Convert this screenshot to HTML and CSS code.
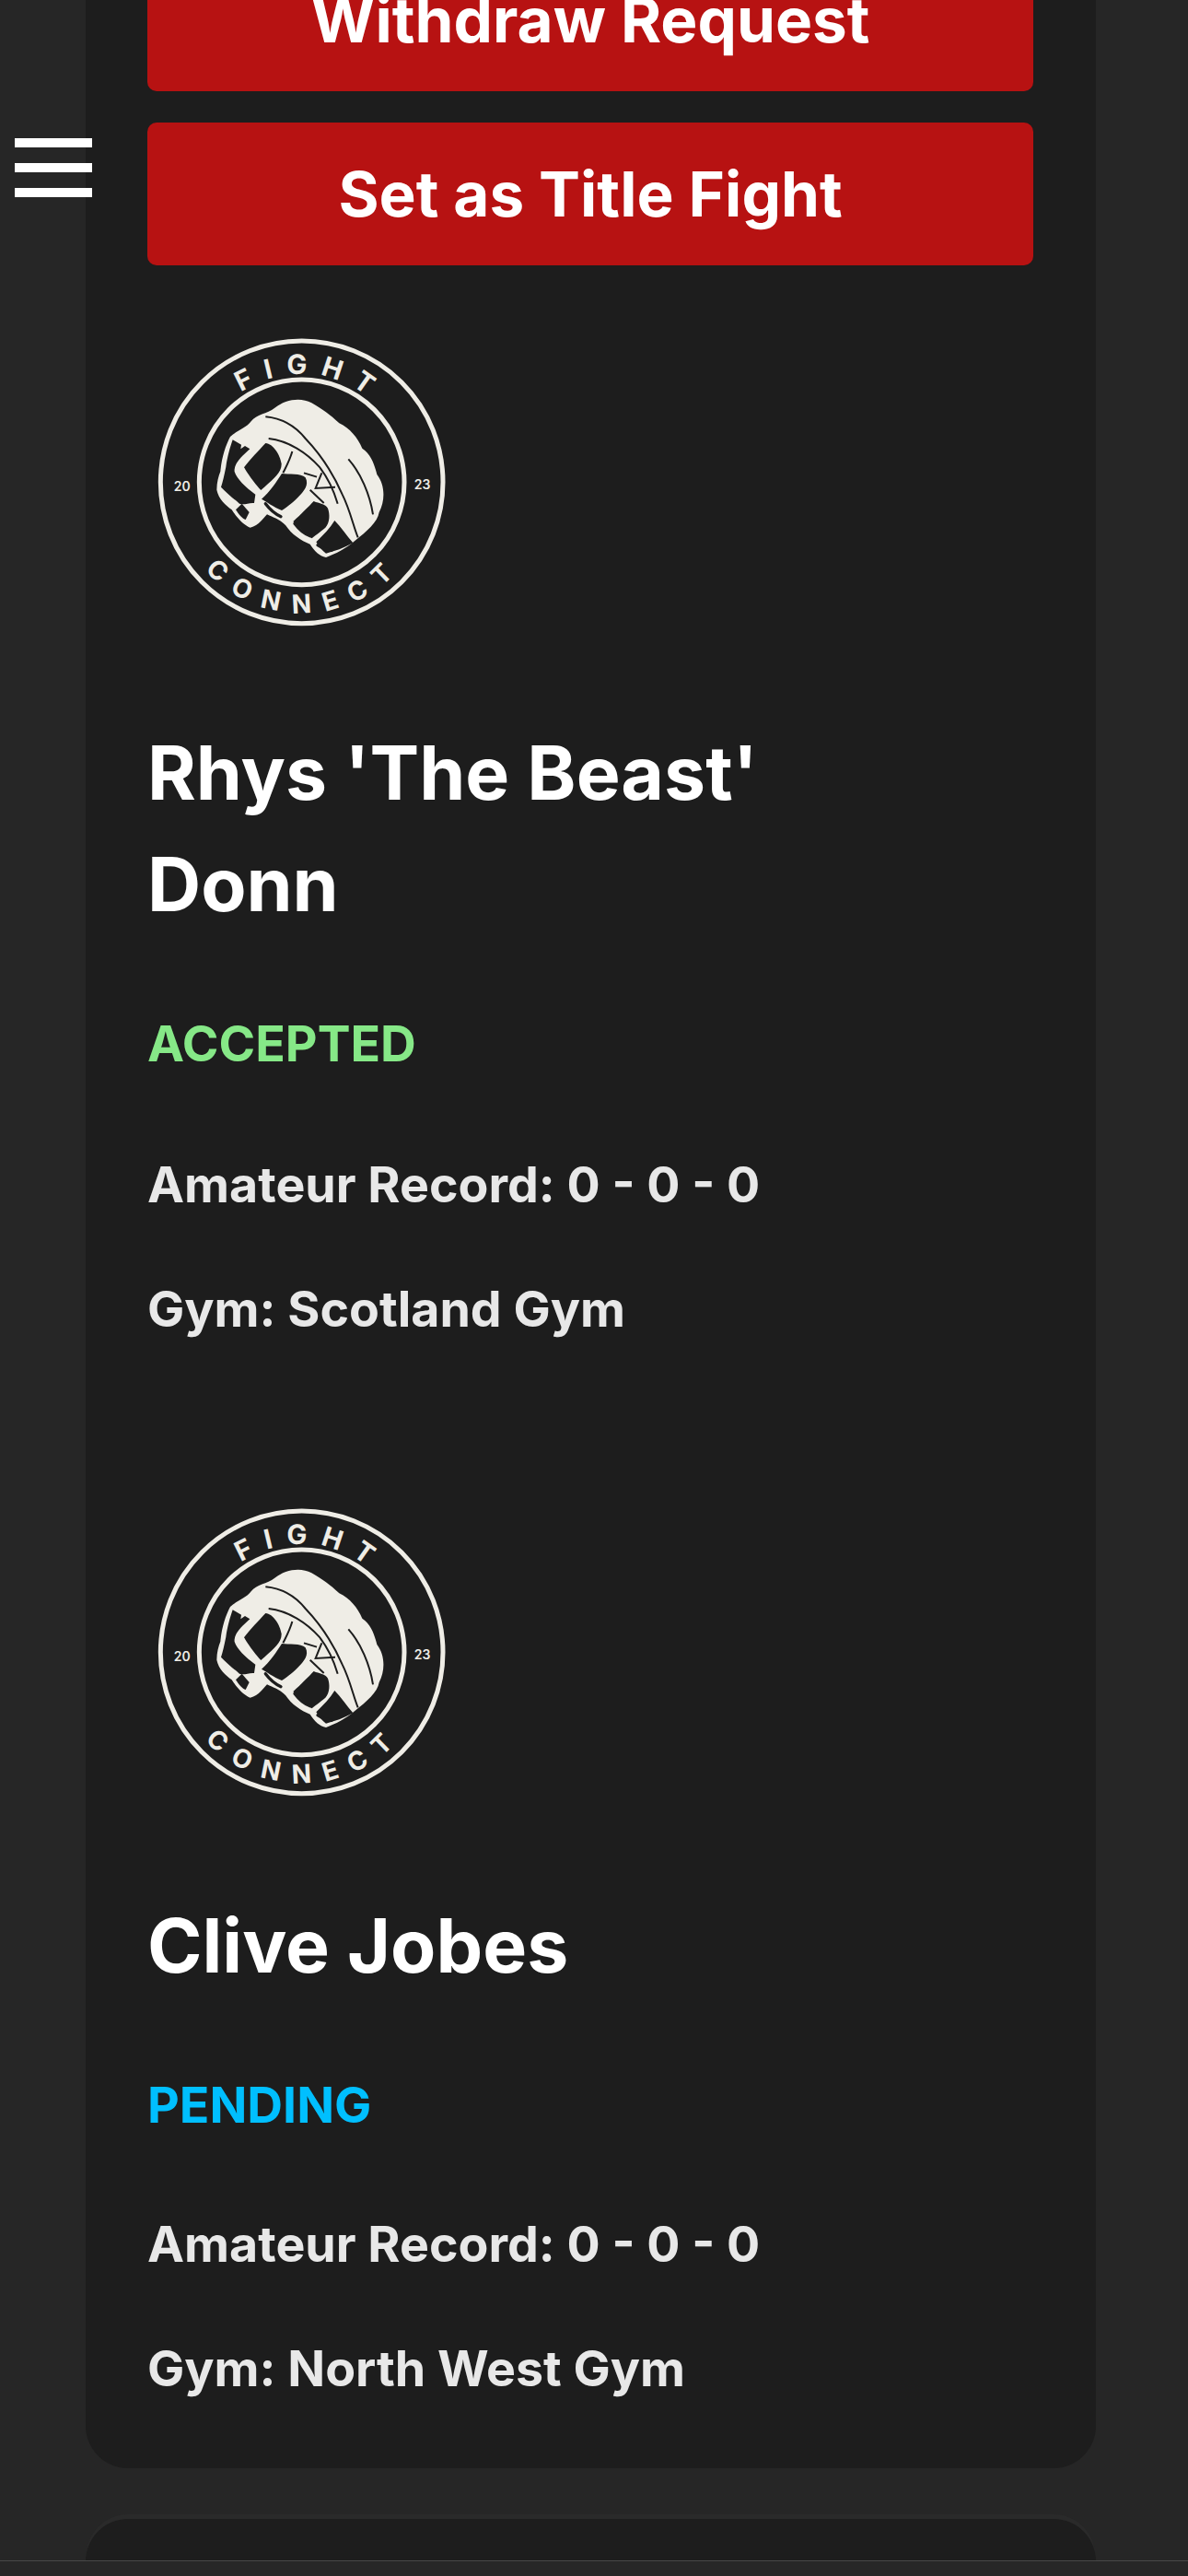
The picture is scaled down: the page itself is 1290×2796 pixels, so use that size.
FILE: index.html
```html
<!DOCTYPE html>
<html lang="en">
<head>
  <meta charset="UTF-8">
  <meta name="viewport" content="width=device-width, initial-scale=1.0">
  <title>Fight Connect | Fight Requests</title>
  <link rel="stylesheet" href="styles.css">
</head>
<body>
  <svg width="0" height="0" class="fc-defs">
    <symbol id="fc-logo" viewBox="30 15 1008 1008">
      <circle class="fc-ring" cx="533" cy="520" r="460"/>
      <circle class="fc-ring" cx="533" cy="520" r="334"/>
      <path id="fc-arc-top" fill="none" d="M181 520a352 352 0 0 1 704 0"/>
      <path id="fc-arc-bottom" fill="none" d="M107 520a426 426 0 0 0 852 0"/>
      <text class="fc-arc-text fc-arc-fight"><textPath href="#fc-arc-top" startOffset="52.6%" text-anchor="middle">FIGHT</textPath></text>
      <text class="fc-arc-text fc-arc-connect"><textPath href="#fc-arc-bottom" startOffset="50.9%" text-anchor="middle">CONNECT</textPath></text>
      <text class="fc-year" x="143" y="548" text-anchor="middle">20</text>
      <text class="fc-year" x="926" y="543" text-anchor="middle">23</text>
      <!-- wrist wrap -->
      <path class="fc-fill" d="M300 372C325 350 350 345 368 322C385 298 420 298 445 278C480 250 530 242 565 262C600 282 625 300 655 328C690 345 715 375 730 410C760 430 770 465 778 495C805 530 805 580 785 618C780 650 745 680 705 712C680 735 640 755 612 765C590 760 575 745 560 722C530 710 500 690 480 660C460 640 440 635 420 625C405 640 395 660 365 668C345 660 325 640 305 610C285 595 262 575 256 545C256 520 262 500 268 485C272 440 285 400 300 372Z"/>
      <!-- knuckles and the gaps between them -->
      <path class="fc-cut" d="M415 393C440 395 462 430 467 460C468 490 440 510 400 546C385 530 365 505 345 472C365 445 395 415 415 393Z"/>
      <path class="fc-cut" d="M468 492C490 495 530 490 545 505C558 530 540 550 520 570C500 590 480 605 468 612C440 600 420 585 402 575C430 550 450 520 468 492Z"/>
      <path class="fc-cut" d="M572 582C590 590 610 590 618 605C625 625 625 650 610 668C590 685 575 695 565 703C545 685 525 670 505 648C530 625 555 600 572 582Z"/>
      <path class="fc-cut" d="M640 645C660 665 680 695 700 718C670 735 640 745 612 752C600 745 590 730 580 715C605 690 625 670 640 645Z"/>
      <!-- thumb -->
      <path class="fc-cut" d="M308 382L336 398L334 412L348 402L364 412L340 434C322 452 312 470 314 486C322 510 348 535 382 560L378 588C360 586 345 596 330 590C312 574 288 556 270 536C276 518 281 495 286 470C291 435 300 405 308 382Z"/>
      <path class="fc-cut" d="M318 610L338 590L362 618L350 642C340 640 328 625 318 610Z"/>
      <!-- wrap lines -->
      <path class="fc-line" d="M415 307C470 312 510 335 545 378C590 425 630 480 665 560C690 610 700 660 716 700"/>
      <path class="fc-line" d="M425 378C490 385 550 425 590 470C610 495 635 540 650 590"/>
      <path class="fc-line" d="M685 445C725 490 755 560 765 625"/>
      <path class="fc-line" d="M502 420C495 445 485 465 472 490"/>
      <path class="fc-line" d="M540 490L582 503M598 490L578 540L642 536"/>
      <path class="fc-line" d="M560 545L605 588"/>
      <path class="fc-crease" d="M415 590C430 610 450 625 465 632M510 655C525 675 545 690 560 695M585 725C600 735 615 740 630 742"/>
    </symbol>
  </svg>

  <button class="menu-toggle" aria-label="Menu"><span></span><span></span><span></span></button>

  <div class="fc-page">
    <div class="fight-card">
      <button class="fc-btn">Withdraw Request</button>
      <button class="fc-btn">Set as Title Fight</button>

      <div class="fighter">
        <svg class="fighter-logo"><use href="#fc-logo"/></svg>
        <h2>Rhys 'The Beast' Donn</h2>
        <p class="status status-accepted">ACCEPTED</p>
        <p class="fighter-info">Amateur Record: 0 - 0 - 0</p>
        <p class="fighter-info">Gym: Scotland Gym</p>
      </div>

      <div class="fighter">
        <svg class="fighter-logo"><use href="#fc-logo"/></svg>
        <h2>Clive Jobes</h2>
        <p class="status status-pending">PENDING</p>
        <p class="fighter-info">Amateur Record: 0 - 0 - 0</p>
        <p class="fighter-info">Gym: North West Gym</p>
      </div>
    </div>

    <div class="fight-card fight-card-next"></div>
  </div>

  <div class="browser-bar"></div>
</body>
</html>
```

FILE: styles.css
```css
:root {
  --page-bg: #262626;
  --card-bg: #1d1d1d;
  --red: #b71212;
  --cream: #efede6;
}
html, body {
  height: 100%;
}
body {
  margin: 0;
  background: var(--page-bg);
  color: #fff;
  font-family: Inter, "Liberation Sans", sans-serif;
  overflow: hidden;
}
.fc-defs {
  position: absolute;
}
.fc-page {
  display: flex;
  flex-direction: column;
  gap: 55px;
  margin: -56px 100px 0 93px;
}
.fight-card {
  background: var(--card-bg);
  border-radius: 0 0 46px 46px;
  padding: 0 68px 75px 67px;
  display: flex;
  flex-direction: column;
}
.fight-card-next {
  border-radius: 46px 46px 0 0;
  height: 200px;
  padding: 0;
  box-shadow: 0 -6px 0 -1px #2a2a2a;
}
.fc-btn {
  display: block;
  width: 100%;
  height: 155px;
  margin-bottom: 34px;
  border: 0;
  border-radius: 10px;
  background: var(--red);
  color: #fff;
  font-family: inherit;
  font-size: 67.4px;
  font-weight: 700;
}
.fc-btn:last-of-type {
  margin-bottom: 0;
}
.fighter {
  padding-top: 67px;
}
.fighter + .fighter {
  padding-top: 171px;
}
.fighter-logo {
  display: block;
  width: 336px;
  height: 336px;
}
.fighter h2 {
  margin: 87px 100px 0 0;
  font-size: 80.5px;
  font-weight: 700;
  line-height: 121px;
}
.fighter + .fighter h2 {
  margin-top: 90px;
}
.status {
  margin: 80px 0 0;
  font-size: 53.7px;
  font-weight: 700;
  line-height: 66px;
}
.status-accepted {
  color: #86e887;
}
.status-pending {
  color: #00bfff;
}
.fighter-info {
  margin: 69px 0 0;
  font-size: 53.7px;
  font-weight: 700;
  line-height: 66px;
  color: #e8e8e8;
}
.status + .fighter-info {
  margin-top: 87px;
}
.fighter + .fighter .status + .fighter-info {
  margin-top: 85px;
}
.menu-toggle {
  position: fixed;
  top: 150px;
  left: 16px;
  width: 84px;
  padding: 0;
  border: 0;
  background: none;
  display: flex;
  flex-direction: column;
  gap: 17px;
}
.menu-toggle span {
  display: block;
  height: 10px;
  background: #fff;
}
.browser-bar {
  position: fixed;
  left: 0;
  right: 0;
  bottom: 0;
  height: 16px;
  background: #272727;
  border-top: 1px solid #484848;
}
/* logo parts */
.fc-ring {
  fill: none;
  stroke: var(--cream);
  stroke-width: 15;
}
.fc-fill {
  fill: var(--cream);
}
.fc-cut {
  fill: var(--card-bg);
}
.fc-line {
  fill: none;
  stroke: var(--card-bg);
  stroke-width: 6;
}
.fc-crease {
  fill: none;
  stroke: var(--card-bg);
  stroke-width: 10;
  stroke-linecap: round;
}
.fc-arc-text {
  fill: var(--cream);
  font-family: Inter, sans-serif;
  font-weight: 700;
}
.fc-arc-fight {
  font-size: 88px;
  letter-spacing: 42px;
}
.fc-arc-connect {
  font-size: 84px;
  letter-spacing: 44px;
}
.fc-year {
  fill: var(--cream);
  font-family: Inter, sans-serif;
  font-size: 42px;
  font-weight: 600;
}
```
